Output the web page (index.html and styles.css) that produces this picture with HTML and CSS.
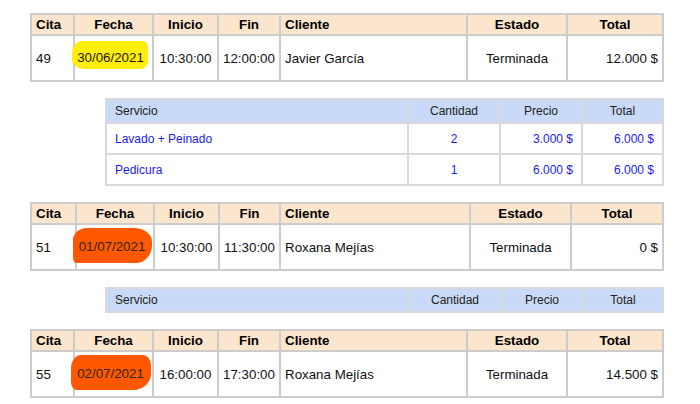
FILE: index.html
```html
<!DOCTYPE html>
<html lang="es">
<head>
<meta charset="utf-8">
<title>Citas</title>
<link rel="stylesheet" href="styles.css">
</head>
<body>
<div class="page">
  <table class="cita">
    <colgroup>
      <col class="c1"><col class="c2"><col class="c3"><col class="c4"><col class="c5"><col class="c6"><col class="c7">
    </colgroup>
    <thead>
      <tr><th class="l">Cita</th><th>Fecha</th><th>Inicio</th><th>Fin</th><th class="l">Cliente</th><th>Estado</th><th>Total</th></tr>
    </thead>
    <tbody>
      <tr><td class="l">49</td><td class="date"><span class="hl yellow">30/06/2021</span></td><td>10:30:00</td><td>12:00:00</td><td class="l">Javier García</td><td>Terminada</td><td class="r">12.000 $</td></tr>
    </tbody>
  </table>

  <table class="serv">
    <colgroup><col class="s1"><col class="s2"><col class="s3"><col class="s4"></colgroup>
    <thead>
      <tr><th class="l">Servicio</th><th>Cantidad</th><th>Precio</th><th>Total</th></tr>
    </thead>
    <tbody>
      <tr><td class="l">Lavado + Peinado</td><td>2</td><td class="r">3.000 $</td><td class="r">6.000 $</td></tr>
      <tr><td class="l">Pedicura</td><td>1</td><td class="r">6.000 $</td><td class="r">6.000 $</td></tr>
    </tbody>
  </table>

  <table class="cita cita-b">
    <colgroup>
      <col class="c1"><col class="c2"><col class="c3"><col class="c4"><col class="c5"><col class="c6"><col class="c7">
    </colgroup>
    <thead>
      <tr><th class="l">Cita</th><th>Fecha</th><th>Inicio</th><th>Fin</th><th class="l">Cliente</th><th>Estado</th><th>Total</th></tr>
    </thead>
    <tbody>
      <tr><td class="l">51</td><td class="date"><span class="hl orange">01/07/2021</span></td><td>10:30:00</td><td>11:30:00</td><td class="l">Roxana Mejías</td><td>Terminada</td><td class="r">0 $</td></tr>
    </tbody>
  </table>

  <table class="serv serv-b">
    <colgroup><col class="s1"><col class="s2"><col class="s3"><col class="s4"></colgroup>
    <thead>
      <tr><th class="l">Servicio</th><th>Cantidad</th><th>Precio</th><th>Total</th></tr>
    </thead>
  </table>

  <table class="cita">
    <colgroup>
      <col class="c1"><col class="c2"><col class="c3"><col class="c4"><col class="c5"><col class="c6"><col class="c7">
    </colgroup>
    <thead>
      <tr><th class="l">Cita</th><th>Fecha</th><th>Inicio</th><th>Fin</th><th class="l">Cliente</th><th>Estado</th><th>Total</th></tr>
    </thead>
    <tbody>
      <tr><td class="l">55</td><td class="date"><span class="hl orange orange-b">02/07/2021</span></td><td>16:00:00</td><td>17:30:00</td><td class="l">Roxana Mejías</td><td>Terminada</td><td class="r">14.500 $</td></tr>
    </tbody>
  </table>
</div>
</body>
</html>
```

FILE: styles.css
```css
html, body {
  margin: 0;
  padding: 0;
  background: #ffffff;
}

body {
  font-family: "Liberation Sans", Arial, sans-serif;
  color: #111;
}

.page {
  display: flex;
  flex-direction: column;
  align-items: flex-start;
  gap: 16px;
  padding: 13px 0 0 30px;
}

table {
  border-collapse: collapse;
  table-layout: fixed;
}

/* main appointment table */
.cita {
  width: 632px;
  font-size: 13.33px;
  border: 2px solid #cccccc;
}

.cita th,
.cita td {
  border: 2px solid #cccccc;
  text-align: center;
  padding: 0 4px;
  white-space: nowrap;
}

.cita th {
  background: #fce5cd;
  font-weight: bold;
  height: 19px;
  line-height: 17px;
  color: #000;
}

.cita td {
  height: 44px;
  color: #111;
}

.c1 { width: 43px; }
.c2 { width: 79px; }
.c3 { width: 65px; }
.c4 { width: 62px; }
.c5 { width: 187px; }
.c6 { width: 100px; }
.c7 { width: 96px; }

.cita-b .c1 { width: 45px; }
.cita-b .c2 { width: 78px; }
.cita-b .c3 { width: 65px; }
.cita-b .c4 { width: 61px; }
.cita-b .c5 { width: 190px; }
.cita-b .c6 { width: 101px; }
.cita-b .c7 { width: 92px; }

.l { text-align: left !important; }
.r { text-align: right !important; }

.cita td.date {
  padding: 0 6px 0 0;
}

/* highlights: padding cancelled by negative margins so they don't move layout */
.hl {
  display: inline-block;
  line-height: 16px;
}

.yellow {
  background: #ffed0c;
  padding: 9px 4px 3px 5px;
  margin: -9px -4px -3px -5px;
  border-radius: 10px 5px 8px 12px / 12px 6px 8px 10px;
  color: #1c1a00;
}

.orange {
  background: #ff5800;
  padding: 11px 7px 8px 6px;
  margin: -11px -7px -8px -6px;
  border-radius: 14px 18px 16px 3px / 12px 14px 18px 6px;
  color: #2e2600;
}

.orange-b {
  border-radius: 10px 8px 18px 6px / 14px 10px 16px 8px;
}

/* services table */
.serv {
  margin-left: 75px;
  width: 557px;
  font-size: 12px;
  border: 2px solid #d9d9d9;
}

.serv th,
.serv td {
  border: 2px solid #d9d9d9;
  text-align: center;
  padding: 0 8px;
  white-space: nowrap;
}

.serv th {
  background: #c9daf8;
  font-weight: normal;
  color: #222;
  height: 22px;
}

.serv td {
  height: 29px;
  color: #1a1af0;
}

.s1 { width: 302px; }
.s2 { width: 92px; }
.s3 { width: 82px; }
.s4 { width: 81px; }

.serv-b .s1 { width: 303px; }
.serv-b .s4 { width: 80px; }
```
